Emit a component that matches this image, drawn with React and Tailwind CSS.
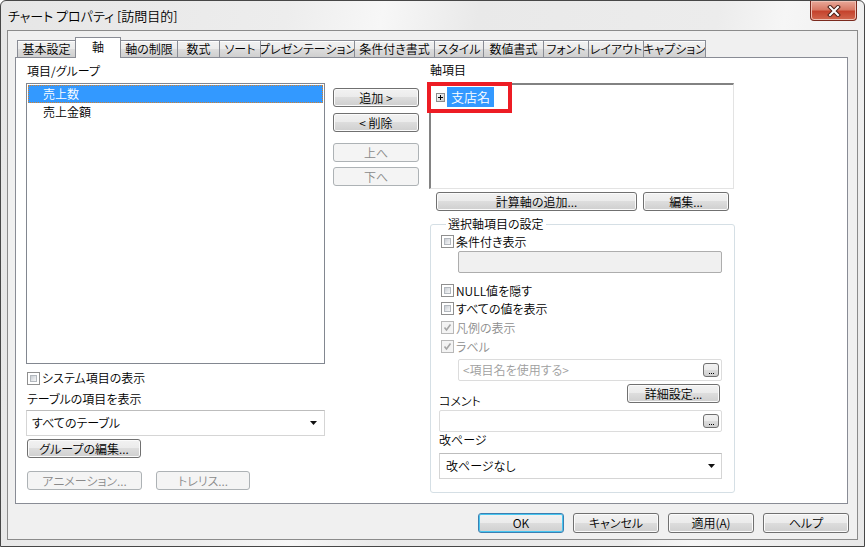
import React from "react";

const btnBase =
  "flex items-center justify-center rounded-[3px] border text-[12px] leading-[14px] whitespace-nowrap";
const btnNormal =
  "border-[#707070] bg-[linear-gradient(#f2f2f2_0%,#ebebeb_49%,#dddddd_50%,#cfcfcf_100%)] shadow-[inset_0_0_0_1px_#fbfbfb] text-black";
const btnDisabled = "border-[#adb2b5] bg-[#f4f4f4] text-[#8a8a8a]";

function Check({ disabled, checked }) {
  return (
    <div
      className={`relative w-[13px] h-[13px] shrink-0 border ${
        disabled ? "border-[#b8b8b8] bg-[#f4f4f4]" : "border-[#8f8f8f] bg-white"
      } p-[2px]`}
    >
      {disabled ? (
        <div className="w-full h-full bg-[#f2f2f2]" />
      ) : (
        <div className="w-full h-full border border-[#b3b8be] bg-[linear-gradient(135deg,#c9cdd3_0%,#e6e8eb_60%,#f6f6f6_100%)]" />
      )}
      {checked && (
        <svg className="absolute left-[1px] top-[1px]" width="9" height="9" viewBox="0 0 9 9">
          <path d="M1.5 4.5 L3.5 7 L7.5 1.5" fill="none" stroke="#a5a5a5" strokeWidth="1.6" />
        </svg>
      )}
    </div>
  );
}

function Arrow() {
  return (
    <svg width="7" height="4" viewBox="0 0 7 4">
      <path d="M0 0 H7 L3.5 4 Z" fill="#111" />
    </svg>
  );
}

function DotBtn() {
  return (
    <div className="w-[16px] h-[14px] rounded-[3px] border border-[#707070] bg-[linear-gradient(#f2f2f2_0%,#ebebeb_49%,#dddddd_50%,#cfcfcf_100%)] flex items-end justify-center pb-[2px]">
      <div className="flex gap-[1px]">
        <div className="w-[1px] h-[1px] bg-black" />
        <div className="w-[1px] h-[1px] bg-black" />
        <div className="w-[1px] h-[1px] bg-black" />
      </div>
    </div>
  );
}

const tabs = [
  ["基本設定", "w-[59px]"],
  ["軸", "w-[46px]"],
  ["軸の制限", "w-[58px]"],
  ["数式", "w-[43px]"],
  ["ソート", "w-[42px]"],
  ["プレゼンテーション", "w-[95px]"],
  ["条件付き書式", "w-[81px]"],
  ["スタイル", "w-[50px]"],
  ["数値書式", "w-[61px]"],
  ["フォント", "w-[46px]"],
  ["レイアウト", "w-[56px]"],
  ["キャプション", "w-[63px]"],
];

export default function App() {
  return (
    <div className="w-[865px] h-[547px] font-['Noto_Sans_CJK_JP',sans-serif] font-[350] [font-feature-settings:'palt'] text-[12px] leading-[14px] text-black">
      <div className="w-full h-full flex flex-col border border-[#474747] rounded-t-[6px] bg-[linear-gradient(100deg,#e6e6e6_0%,#ededed_30%,#f7f7f7_40%,#e9e9e9_50%,#ececec_75%,#f6f6f6_82%,#e8e8e8_100%)] px-[6px] pb-[6px]">
        {/* title bar */}
        <div className="h-[29px] flex items-start">
          <div className="pl-[1px] pt-[7px] text-[13px] leading-[16px] whitespace-nowrap">
            チャート プロパティ [訪問目的]
          </div>
          <div className="ml-auto mr-[1px] w-[47px] h-[20px] rounded-b-[4px] border border-t-0 border-[#7a2a1e] bg-[linear-gradient(#e9a999_0%,#d87a66_45%,#c5432d_55%,#d2684f_100%)] shadow-[inset_0_0_0_1px_#eec0b4] flex items-center justify-center">
            <svg width="14" height="12" viewBox="0 0 14 12">
              <path d="M3 2 L11 10 M11 2 L3 10" stroke="#4a2018" strokeWidth="4" strokeLinecap="square" />
              <path d="M3 2 L11 10 M11 2 L3 10" stroke="#ffffff" strokeWidth="2" strokeLinecap="square" />
            </svg>
          </div>
        </div>

        {/* client */}
        <div className="flex-1 border border-[#8b8b8b] bg-[#f0f0f0] flex flex-col pl-[7px] pr-[9px]">
          {/* tab strip */}
          <div className="h-[26px] flex items-end pl-[3px]">
            {tabs.map(([t, w], i) =>
              i === 1 ? (
                <div
                  key={t}
                  className={`${w} relative z-10 -ml-[1px] mb-[-1px] h-[21px] border border-b-0 border-[#898c95] bg-white flex items-start justify-center pt-[2px] whitespace-nowrap`}
                >
                  {t}
                </div>
              ) : (
                <div
                  key={t}
                  className={`${w} -ml-[1px] h-[17px] border border-b-0 border-[#898c95] bg-[linear-gradient(#f2f2f2_0%,#ebebeb_50%,#dddddd_51%,#cfcfcf_100%)] shadow-[inset_0_1px_0_#ffffff] flex items-center justify-center whitespace-nowrap overflow-hidden`}
                >
                  {t}
                </div>
              )
            )}
          </div>

          {/* panel */}
          <div className="h-[447px] border border-[#898c95] bg-white flex pl-[10px]">
            {/* left column */}
            <div className="w-[299px] flex flex-col pt-[6px]">
              <div className="pl-[1px]">項目/グループ</div>
              <div className="mt-[5px] h-[281px] border border-[#828790] bg-white p-[1px]">
                <div className="h-[18px] bg-[#3399ff] border border-dotted border-[#d3802d] text-white flex items-center pl-[14px]">
                  売上数
                </div>
                <div className="h-[17px] flex items-center pl-[15px]">売上金額</div>
              </div>
              <div className="mt-[7px] flex items-center gap-[2px] pl-[1px]">
                <Check />
                <span>システム項目の表示</span>
              </div>
              <div className="mt-[7px] pl-[1px]">テーブルの項目を表示</div>
              <div className="mt-[4px] h-[26px] border border-[#d5d5d5] border-t-[#bdbdbd] bg-white flex items-center pl-[5px] pr-[7px]">
                <span>すべてのテーブル</span>
                <span className="ml-auto">
                  <Arrow />
                </span>
              </div>
              <div className={`${btnBase} ${btnNormal} mt-[3px] ml-[1px] w-[114px] h-[19px]`}>グループの編集...</div>
              <div className="mt-[13px] ml-[1px] flex gap-[14px]">
                <div className={`${btnBase} ${btnDisabled} w-[115px] h-[19px]`}>アニメーション...</div>
                <div className={`${btnBase} ${btnDisabled} w-[94px] h-[19px]`}>トレリス...</div>
              </div>
            </div>

            {/* middle column */}
            <div className="ml-[8px] w-[86px] flex flex-col pt-[30px]">
              <div className={`${btnBase} ${btnNormal} h-[19px]`}>追加 &gt;</div>
              <div className={`${btnBase} ${btnNormal} h-[19px] mt-[6px]`}>&lt; 削除</div>
              <div className={`${btnBase} ${btnDisabled} h-[19px] mt-[11px]`}>上へ</div>
              <div className={`${btnBase} ${btnDisabled} h-[19px] mt-[5px]`}>下へ</div>
            </div>

            {/* right column */}
            <div className="ml-[10px] w-[306px] flex flex-col pt-[5px]">
              <div className="pl-[1px]">軸項目</div>
              <div className="relative mt-[6px]">
                <div className="h-[106px] w-[305px] border-t-2 border-l-2 border-r border-b border-t-[#828282] border-l-[#828282] border-r-[#e3e3e3] border-b-[#e3e3e3] bg-white pt-[2px] pl-[5px]">
                  <div className="flex items-center gap-[2px]">
                    <svg width="9" height="9" viewBox="0 0 9 9">
                      <defs>
                        <linearGradient id="pg" x1="0" y1="0" x2="1" y2="1">
                          <stop offset="0" stopColor="#ffffff" />
                          <stop offset="1" stopColor="#c8c8c8" />
                        </linearGradient>
                      </defs>
                      <rect x="0.5" y="0.5" width="8" height="8" fill="url(#pg)" stroke="#8c8c8c" />
                      <path d="M2 4.5 H7 M4.5 2 V7" stroke="#000" strokeWidth="1" />
                    </svg>
                    <div className="h-[20px] bg-[#3399ff] text-white flex items-center px-[4px] text-[13px]">支店名</div>
                  </div>
                </div>
                <div className="absolute left-[-2px] top-[-1px] w-[85px] h-[31px] border-[4px] border-[#ed1c24]" />
              </div>
              <div className="mt-[3px] flex">
                <div className={`${btnBase} ${btnNormal} ml-[7px] w-[201px] h-[19px]`}>計算軸の追加...</div>
                <div className={`${btnBase} ${btnNormal} ml-[6px] w-[86px] h-[19px]`}>編集...</div>
              </div>

              <fieldset className="mt-[6px] ml-[1px] w-[305px] min-w-0 border border-[#d5dfe5] rounded-[3px] pl-[10px] pr-0 pt-0 pb-[13px] m-0">
                <legend className="ml-[5px] px-[2px] leading-[14px]">選択軸項目の設定</legend>
                <div className="mt-[4px] h-[13px] flex items-center gap-[2px]">
                  <Check />
                  <span>条件付き表示</span>
                </div>
                <div className="mt-[3px] ml-[17px] w-[264px] h-[22px] border border-[#adadad] rounded-[2px] bg-[#f0f0f0]" />
                <div className="mt-[11px] h-[13px] flex items-center gap-[2px]">
                  <Check />
                  <span>NULL値を隠す</span>
                </div>
                <div className="mt-[5px] h-[13px] flex items-center gap-[2px]">
                  <Check />
                  <span>すべての値を表示</span>
                </div>
                <div className="mt-[6px] h-[13px] flex items-center gap-[2px] text-[#8d8d8d]">
                  <Check disabled checked />
                  <span>凡例の表示</span>
                </div>
                <div className="mt-[6px] h-[13px] flex items-center gap-[2px] text-[#8d8d8d]">
                  <Check disabled checked />
                  <span>ラベル</span>
                </div>
                <div className="mt-[6px] ml-[17px] w-[264px] h-[22px] border border-[#dcdcdc] rounded-[2px] bg-white flex items-center pl-[4px] pr-[2px] text-[#9e9e9e]">
                  <span>&lt;項目名を使用する&gt;</span>
                  <span className="ml-auto">
                    <DotBtn />
                  </span>
                </div>
                <div className="mt-[3px] ml-[-2px] h-[24px] flex">
                  <div className="w-[188px] self-end">コメント</div>
                  <div className={`${btnBase} ${btnNormal} w-[93px] h-[19px] self-start`}>詳細設定...</div>
                </div>
                <div className="mt-[2px] ml-[-2px] w-[283px] h-[22px] border border-[#dcdcdc] rounded-[2px] bg-white flex items-center justify-end pr-[2px]">
                  <DotBtn />
                </div>
                <div className="mt-[1px] ml-[-2px]">改ページ</div>
                <div className="mt-[6px] ml-[-2px] w-[283px] h-[26px] border border-[#d5d5d5] border-t-[#bdbdbd] bg-white flex items-center pl-[6px] pr-[6px]">
                  <span>改ページなし</span>
                  <span className="ml-auto">
                    <Arrow />
                  </span>
                </div>
              </fieldset>
            </div>
          </div>

          {/* bottom buttons */}
          <div className="mt-[9px] mr-[-1px] flex justify-end gap-[9px]">
            <div className={`${btnBase} w-[86px] h-[20px] border-[#3c7fb1] bg-[linear-gradient(#f2f2f2_0%,#ebebeb_49%,#dddddd_50%,#cfcfcf_100%)] shadow-[inset_0_0_0_1px_#48c6f0]`}>OK</div>
            <div className={`${btnBase} ${btnNormal} w-[86px] h-[20px]`}>キャンセル</div>
            <div className={`${btnBase} ${btnNormal} w-[86px] h-[20px]`}>適用(A)</div>
            <div className={`${btnBase} ${btnNormal} w-[86px] h-[20px]`}>ヘルプ</div>
          </div>
        </div>
      </div>
    </div>
  );
}
